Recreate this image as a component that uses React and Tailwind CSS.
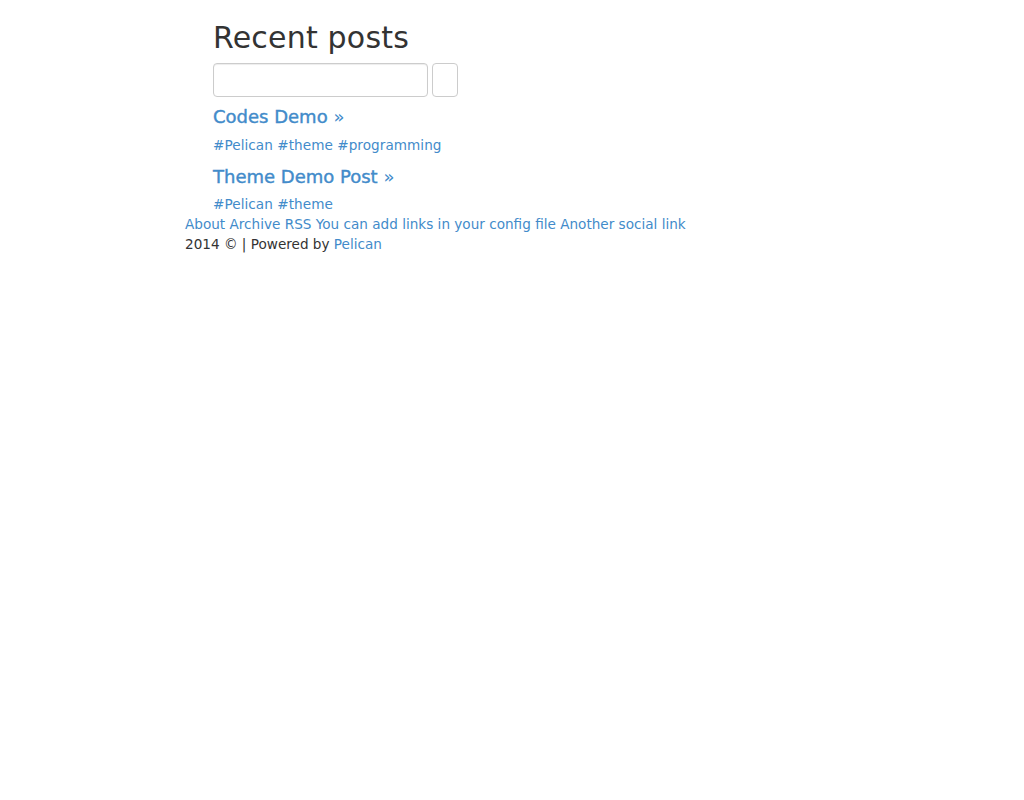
import React from "react";

const posts = [
  { title: "Codes Demo", tags: ["Pelican", "theme", "programming"] },
  { title: "Theme Demo Post", tags: ["Pelican", "theme"] },
];

export default function App() {
  return (
    <div className="min-h-[800px] bg-white text-[#333] text-[13.6px] leading-[20px]" style={{ fontFamily: '"DejaVu Sans", sans-serif' }}>
      <div className="pl-[185px]">
        <div className="pl-[28px]">
          <h3 className="text-[30px] leading-[33px] pt-[21px] font-normal tracking-[0.2px]">Recent posts</h3>
          <form className="flex gap-[4px] mt-[9px]">
            <input className="w-[215px] h-[34px] border border-[#ccc] rounded-[4px] shadow-[inset_0_1px_1px_rgba(0,0,0,0.075)] px-3" />
            <button type="button" className="w-[26px] h-[34px] border border-[#ccc] rounded-[4px] bg-white"></button>
          </form>
          {posts.map((p, idx) => (
            <div key={p.title}>
              <h4 className={`${idx === 0 ? "mt-[10px]" : "mt-[12px]"} text-[18px] leading-[20px] font-normal text-[#428bca] [-webkit-text-stroke:0.4px_#428bca]`}>
                <a href="#">{p.title} <span className="[-webkit-text-stroke:0px]">»</span></a>
              </h4>
              <p className={`${idx === 0 ? "mt-[8px]" : "mt-[7px]"} mb-[10px] text-[#428bca] tracking-[0.05px]`}>
                {p.tags.map((t, i) => (
                  <span key={t}>
                    {i > 0 && " "}
                    <a href="#">#{t}</a>
                  </span>
                ))}
              </p>
            </div>
          ))}
        </div>
        <div className="-mt-[10px]">
          <div className="text-[#428bca]">
            <a href="#">About</a> <a href="#">Archive</a> <a href="#">RSS</a>{" "}
            <a href="#">You can add links in your config file</a> <a href="#">Another social link</a>
          </div>
          <div>
            2014 © | Powered by <a href="#" className="text-[#428bca]">Pelican</a>
          </div>
        </div>
      </div>
    </div>
  );
}
